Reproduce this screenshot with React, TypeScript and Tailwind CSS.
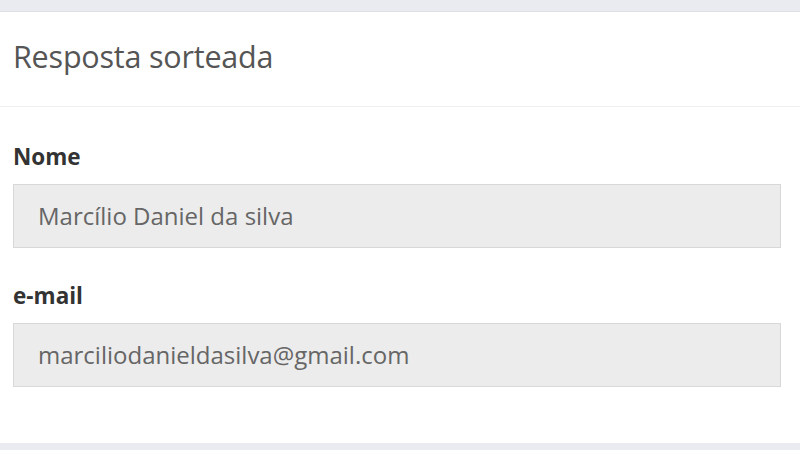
import React from "react";

const fields = [
  { label: "Nome", value: "Marcílio Daniel da silva" },
  { label: "e-mail", value: "marciliodanieldasilva@gmail.com" },
];

const App = () => {
  return (
    <div
      className="w-[800px] h-[450px] bg-[#e9ebf0] pt-[11px] pb-[7px] overflow-hidden"
      style={{ fontFamily: '"Open Sans", "Noto Sans", sans-serif' }}
    >
      <div className="h-full bg-white border-t border-[#dcdfe5] flex flex-col">
        <div className="h-[95px] border-b border-[#efefef] px-[13px] flex items-center pb-[4px]">
          <h2 className="text-[30.5px] text-[#555] font-normal tracking-[-0.2px]">
            Resposta sorteada
          </h2>
        </div>
        <div className="px-[13px] pt-[35px] pr-[19px] flex flex-col gap-[33px]">
          {fields.map((field, index) => (
            <div key={index} className="flex flex-col">
              <label className="text-[22.5px] font-bold text-[#333] leading-[30px] mb-[12px]">
                {field.label}
              </label>
              <div className="h-[64px] bg-[#ececec] border border-[#d8d8d8] flex items-center px-[24px]">
                <span className="text-[24px] text-[#666]">{field.value}</span>
              </div>
            </div>
          ))}
        </div>
      </div>
    </div>
  );
};

export default App;
